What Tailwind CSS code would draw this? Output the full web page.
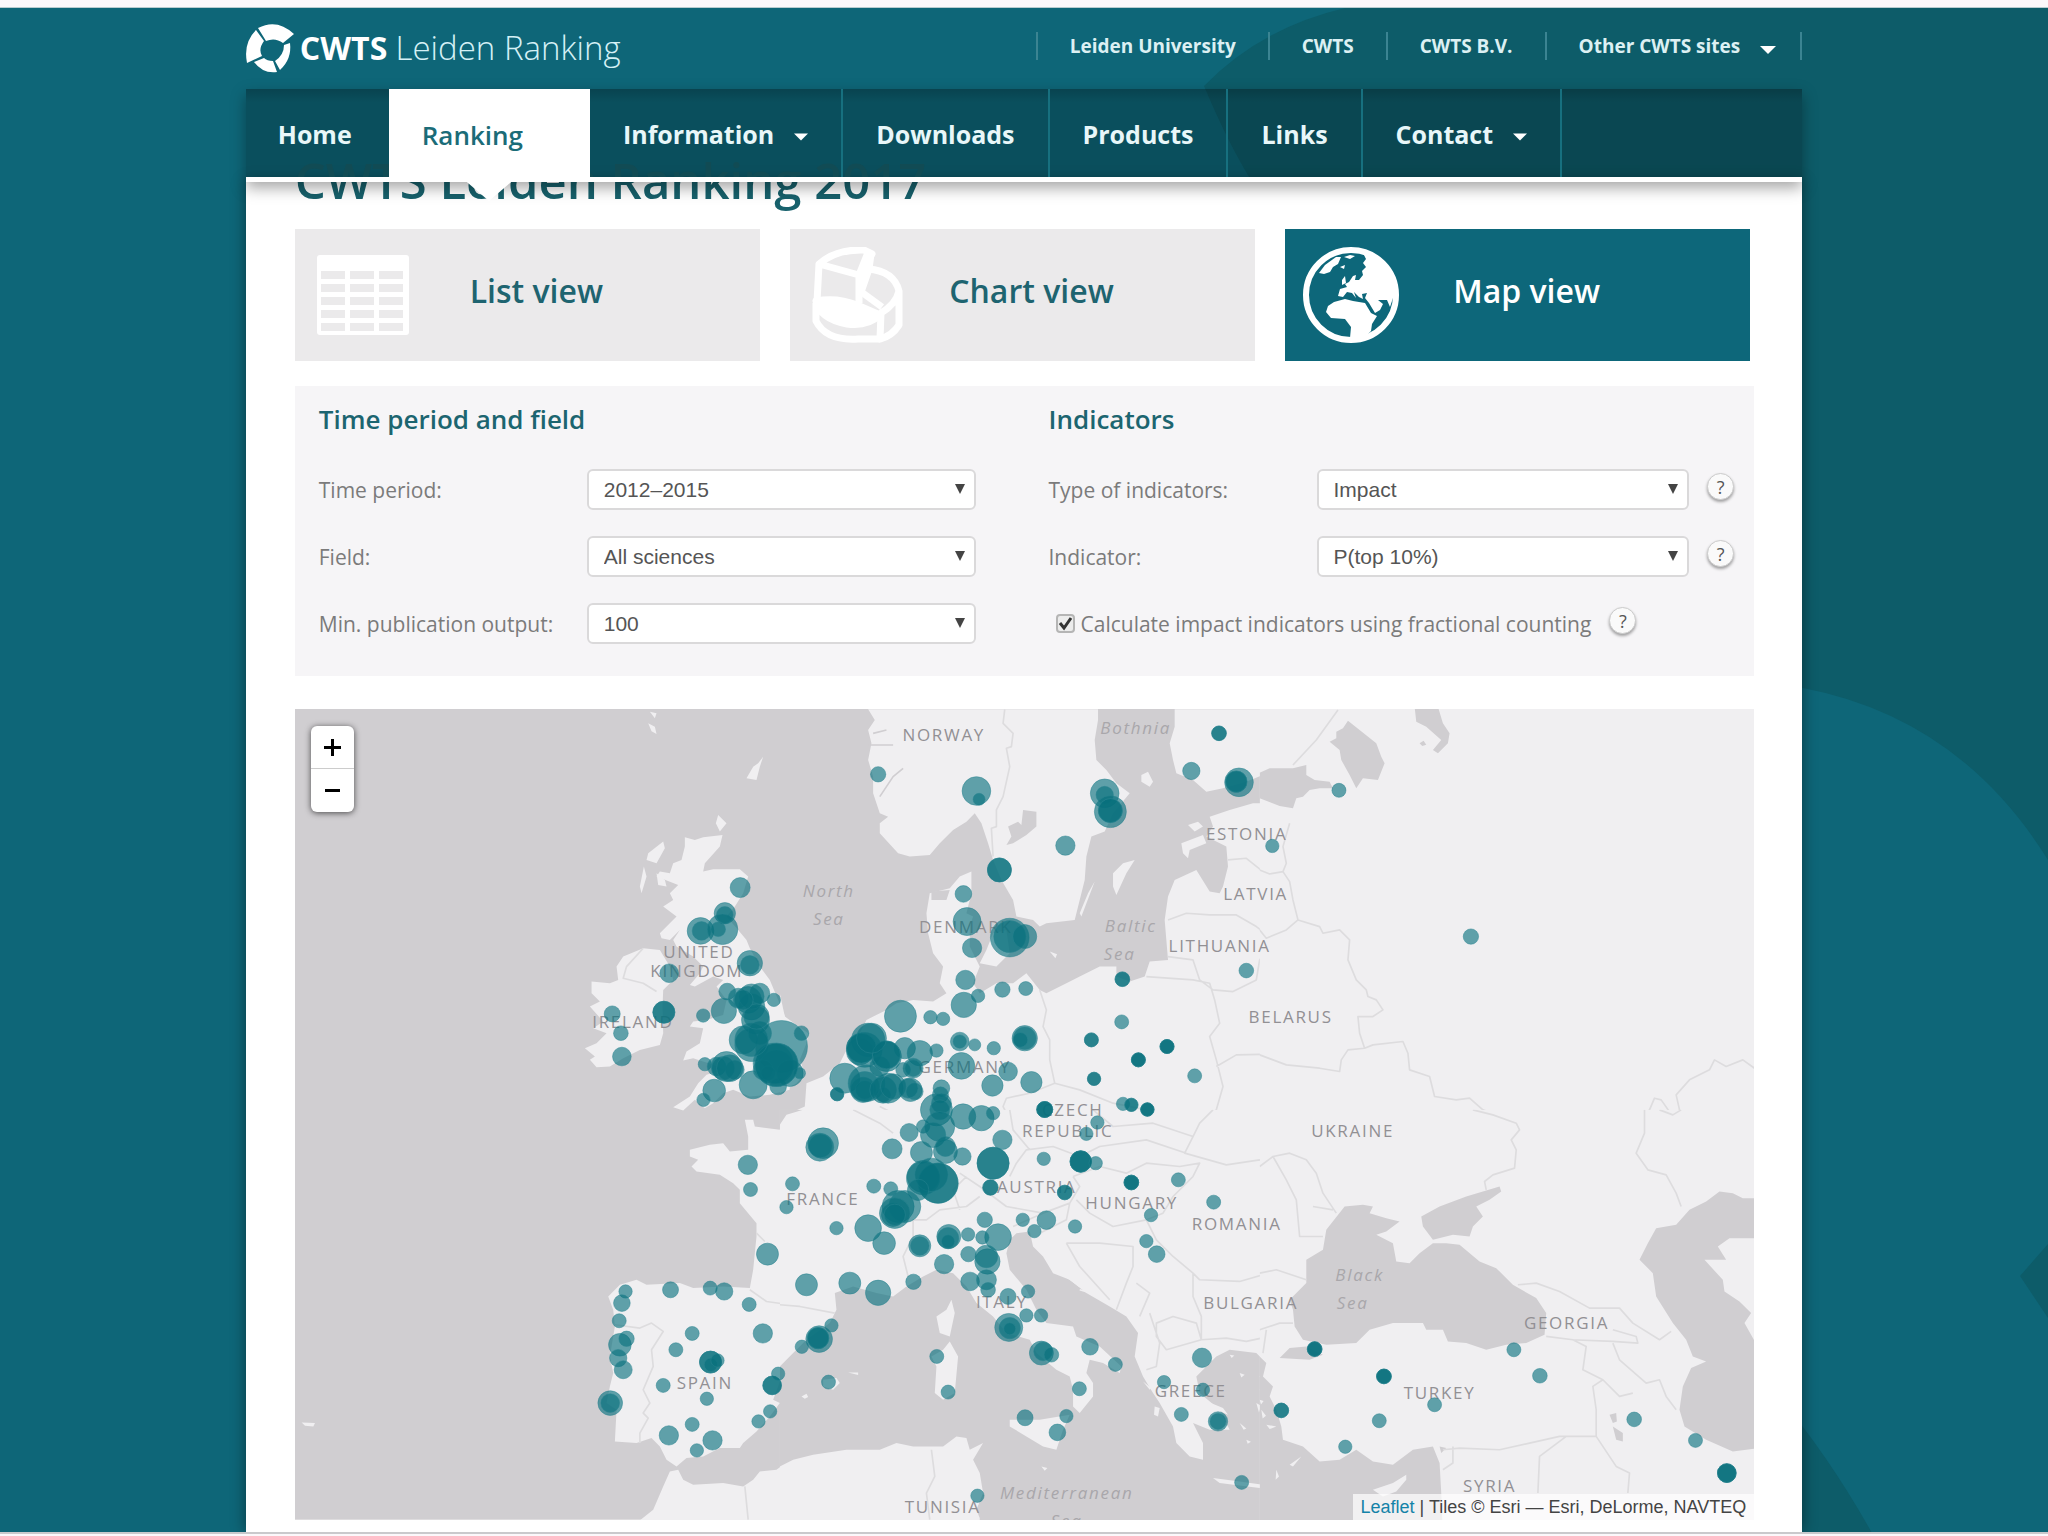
<!DOCTYPE html>
<html lang="en">
<head>
  <meta charset="UTF-8">
  <meta name="viewport" content="width=device-width, initial-scale=1">
  <title>CWTS Leiden Ranking 2017</title>
  <script src="https://cdn.jsdelivr.net/npm/@tailwindcss/browser@4"></script>
</head>
<body class="bg-[#fbf8fb] font-['Open_Sans',sans-serif]">

  <div class="relative mt-[7px] border-t border-[#b9ccd0] bg-[#0e6678] overflow-hidden">
    <!-- Background pattern -->
    <svg class="absolute inset-0 w-full h-full" viewBox="0 0 2048 1525" preserveAspectRatio="xMaxYMin slice" aria-hidden="true">
      <path fill="#0d5c69" d="M1345 0 Q1260 20 1204 78 Q1230 140 1256 180 L1500 700 L1803 680 Q1960 710 2048 852 V0Z"/>
      <path fill="#0d5c69" d="M1780 1390 Q1830 1450 1872 1525 H1780Z M2048 1236 L2020 1268 L2048 1310Z"/>
    </svg>

    <div class="relative w-[76%] mx-auto">
      <!-- Header -->
      <header class="h-[81px] flex justify-between items-start">
        <a href="#" class="flex items-center mt-[15px] text-white">
          <svg class="w-[50px] h-[50px]" viewBox="0 0 50 50" fill="#fff" aria-hidden="true">
            <path d="M12 5 Q31 -5 48 11 L37 20 Q29 14 20 18 Z"/>
            <path d="M10 7 L18 18 Q12 26 16 33 L1 40 Q-3 20 10 7Z"/>
            <path d="M8 39 L18 35 Q21 38 27 38 L31 49 Q17 51 8 39Z"/>
            <path d="M38 22 L44 20 Q46 36 34 47 L29 38 Q38 32 38 22Z"/>
          </svg>
          <span class="ml-1 text-[32px] leading-[50px]"><b>CWTS</b> <span class="font-light text-[33px] text-[#d5f1f6]">Leiden Ranking</span></span>
        </a>
        <div class="flex mt-6 text-[19px] leading-7 font-bold text-[#dcf0f3]">
          <a href="#" class="border-l-2 border-[#3b8492] px-8">Leiden University</a>
          <a href="#" class="border-l-2 border-[#3b8492] px-8">CWTS</a>
          <a href="#" class="border-l-2 border-[#3b8492] px-8">CWTS B.V.</a>
          <a href="#" class="border-x-2 border-[#3b8492] pl-8 pr-6 flex items-center gap-5">Other CWTS sites
            <svg class="w-4 h-2 mt-2" viewBox="0 0 16 8" fill="#fff"><path d="M0 0H16L8 8Z"/></svg>
          </a>
        </div>
      </header>

      <!-- Navbar -->
      <nav class="relative z-20 border-b-[5px] border-white shadow-[0_6px_14px_rgba(0,0,0,0.35)]">
        <div class="h-[88px] flex bg-black/22 bg-linear-to-b from-black/15 to-transparent to-15% text-[25px] font-bold text-[#e8f7f9]">
          <a href="#" class="flex items-center pt-1 pl-8 pr-[37px]">Home</a>
          <a href="#" class="relative flex items-center pt-1 px-[33px] gap-5 bg-white text-[26px] font-semibold text-[#1b6c78]">Ranking
            <svg class="w-[14px] h-2" viewBox="0 0 16 8" fill="#fff"><path d="M0 0H16L8 8Z"/></svg>
            <svg class="absolute left-1/2 -translate-x-1/2 top-full w-14 h-6" viewBox="0 0 56 24" fill="#fff"><path d="M0 0H56L28 24Z"/></svg>
          </a>
          <a href="#" class="flex items-center pt-1 px-[33px] gap-5 border-r-2 border-[#17707f]">Information
            <svg class="w-[14px] h-2 mt-1" viewBox="0 0 16 8" fill="#fff"><path d="M0 0H16L8 8Z"/></svg>
          </a>
          <a href="#" class="flex items-center pt-1 px-[33px] border-r-2 border-[#17707f]">Downloads</a>
          <a href="#" class="flex items-center pt-1 px-[33px] border-r-2 border-[#17707f]">Products</a>
          <a href="#" class="flex items-center pt-1 px-[33px] border-r-2 border-[#17707f]">Links</a>
          <a href="#" class="flex items-center pt-1 px-[33px] gap-5 border-r-2 border-[#17707f]">Contact
            <svg class="w-[14px] h-2 mt-1" viewBox="0 0 16 8" fill="#fff"><path d="M0 0H16L8 8Z"/></svg>
          </a>
        </div>
      </nav>

      <main class="bg-white pl-[49px] pr-12 pb-3 shadow-[0_0_14px_rgba(0,0,0,0.45)]">
        <div class="h-[26px] relative">
          <h1 class="absolute bottom-0 left-0 text-[49px] leading-[56px] font-semibold whitespace-nowrap text-[#17616c]">CWTS Leiden Ranking 2017</h1>
        </div>

        <!-- View switcher -->
        <div class="mt-[21px] pr-1 grid grid-cols-3 gap-[30px] text-[32px] font-semibold text-[#1e6470]">
          <button class="h-[132px] flex items-center bg-[#ebeaeb]">
            <svg class="ml-[22px] w-[92px] h-20" viewBox="0 0 92 80" aria-hidden="true">
              <rect width="92" height="80" rx="3" fill="#fff"/>
              <path fill="#ebeaeb" d="M4 16h24v8H4zM33 16h24v8H33zM62 16h24v8H62zM4 29h24v8H4zM33 29h24v8H33zM62 29h24v8H62zM4 42h24v8H4zM33 42h24v8H33zM62 42h24v8H62zM4 55h24v8H4zM33 55h24v8H33zM62 55h24v8H62zM4 68h24v8H4zM33 68h24v8H33zM62 68h24v8H62z"/>
            </svg>
            <span class="flex-1 pr-24 pb-2">List view</span>
          </button>
          <button class="h-[132px] flex items-center bg-[#ebeaeb]">
            <svg class="ml-[22px] w-[92px] h-24" viewBox="0 0 92 96" fill="none" stroke="#fff" stroke-width="7" stroke-linejoin="round" aria-hidden="true">
              <path d="M7 17Q24 2 52 3L60 7L47 28Z M7 17L5 55 M47 28V56"/>
              <path d="M47 28L55 8L59 7L57 22L49 45Z" fill="#fff"/>
              <path d="M56 22Q82 24 87 44V78Q80 89 68 92L69 66Q84 57 87 44 M48 44L70 60"/>
              <path d="M4 54Q25 50 45 58L68 68Q55 80 35 77Q8 72 4 54Z" fill="#fff"/>
              <path d="M4 56V74Q14 94 46 92L68 92"/>
            </svg>
            <span class="flex-1 pr-24 pb-2">Chart view</span>
          </button>
          <button class="h-[132px] flex items-center bg-[#0d677a] text-white">
            <svg class="ml-[18px] w-24 h-24" viewBox="0 0 96 96" fill="#fff" aria-hidden="true">
              <circle cx="48" cy="48" r="45" fill="none" stroke="#fff" stroke-width="6"/>
              <path d="M60 6L63 12L60 16L63 20L59 24L60 28L56 33L52 33L53 28L50 29L46 35L42 37L44 40L37 42L35 49L40 50L44 45L49 46L53 51L51 45L56 50L60 52L59 47L64 46L62 51L66 56L72 66L77 63L80 57L75 53L84 53L87 60L92 45L86 26L75 13Z"/>
              <path d="M31 55L42 52L50 54L62 56L68 66L74 69L69 77L68 84L60 92L47 91L48 80L42 72L28 71L23 65L25 59Z"/>
              <path d="M22 18L33 10L38 10L35 17L30 20L27 25L21 27L16 26ZM41 10L47 8L52 9L47 12ZM37 20L42 18L41 22ZM39 33L42 29L43 36L39 38Z"/>
            </svg>
            <span class="flex-1 pr-24 pb-2">Map view</span>
          </button>
        </div>

        <!-- Filters -->
        <form class="mt-[25px] grid grid-cols-2 bg-[#f6f5f7] pt-[15px] pb-8 text-[21px] text-[#7b7b7b]">
          <section class="pl-6 pr-[49px]">
            <h2 class="text-[26px] leading-9 font-semibold text-[#1c6570]">Time period and field</h2>
            <div class="mt-8 flex flex-col gap-[26px]">
              <div class="flex items-center h-[41px]">
                <label for="period" class="w-[268px] pt-[3px]">Time period:</label>
                <div class="relative flex-1">
                  <select id="period" class="appearance-none w-full h-[41px] pl-[15px] rounded-md border-2 border-[#dad9da] bg-white text-[#555] font-['Liberation_Sans',sans-serif]"><option>2012–2015</option></select>
                  <svg class="absolute right-[11px] top-[15px] w-[10px] h-[10px] pointer-events-none" viewBox="0 0 10 10" fill="#444"><path d="M0 0H10L5 10Z"/></svg>
                </div>
              </div>
              <div class="flex items-center h-[41px]">
                <label for="field" class="w-[268px] pt-[3px]">Field:</label>
                <div class="relative flex-1">
                  <select id="field" class="appearance-none w-full h-[41px] pl-[15px] rounded-md border-2 border-[#dad9da] bg-white text-[#555] font-['Liberation_Sans',sans-serif]"><option>All sciences</option></select>
                  <svg class="absolute right-[11px] top-[15px] w-[10px] h-[10px] pointer-events-none" viewBox="0 0 10 10" fill="#444"><path d="M0 0H10L5 10Z"/></svg>
                </div>
              </div>
              <div class="flex items-center h-[41px]">
                <label for="output" class="w-[268px] pt-[3px]">Min. publication output:</label>
                <div class="relative flex-1">
                  <select id="output" class="appearance-none w-full h-[41px] pl-[15px] rounded-md border-2 border-[#dad9da] bg-white text-[#555] font-['Liberation_Sans',sans-serif]"><option>100</option></select>
                  <svg class="absolute right-[11px] top-[15px] w-[10px] h-[10px] pointer-events-none" viewBox="0 0 10 10" fill="#444"><path d="M0 0H10L5 10Z"/></svg>
                </div>
              </div>
            </div>
          </section>

          <section class="pl-6 pr-5">
            <h2 class="text-[26px] leading-9 font-semibold text-[#1c6570]">Indicators</h2>
            <div class="mt-8 flex flex-col gap-[26px]">
              <div class="flex items-center h-[41px]">
                <label for="type" class="w-[268px] pt-[3px]">Type of indicators:</label>
                <div class="relative flex-1">
                  <select id="type" class="appearance-none w-full h-[41px] pl-[15px] rounded-md border-2 border-[#dad9da] bg-white text-[#555] font-['Liberation_Sans',sans-serif]"><option>Impact</option></select>
                  <svg class="absolute right-[11px] top-[15px] w-[10px] h-[10px] pointer-events-none" viewBox="0 0 10 10" fill="#444"><path d="M0 0H10L5 10Z"/></svg>
                </div>
                <button type="button" class="ml-[18px] mb-[6px] w-[27px] h-[27px] rounded-full border border-[#ccc] bg-[#fafafa] shadow-[0_2px_3px_rgba(0,0,0,0.35)] text-[18px] leading-6 text-[#555]">?</button>
              </div>
              <div class="flex items-center h-[41px]">
                <label for="indicator" class="w-[268px] pt-[3px]">Indicator:</label>
                <div class="relative flex-1">
                  <select id="indicator" class="appearance-none w-full h-[41px] pl-[15px] rounded-md border-2 border-[#dad9da] bg-white text-[#555] font-['Liberation_Sans',sans-serif]"><option>P(top 10%)</option></select>
                  <svg class="absolute right-[11px] top-[15px] w-[10px] h-[10px] pointer-events-none" viewBox="0 0 10 10" fill="#444"><path d="M0 0H10L5 10Z"/></svg>
                </div>
                <button type="button" class="ml-[18px] mb-[6px] w-[27px] h-[27px] rounded-full border border-[#ccc] bg-[#fafafa] shadow-[0_2px_3px_rgba(0,0,0,0.35)] text-[18px] leading-6 text-[#555]">?</button>
              </div>
              <div class="flex items-center h-[41px]">
                <span class="relative ml-[7px] w-[19px] h-[19px]">
                  <input id="fractional" type="checkbox" checked class="block appearance-none w-[19px] h-[19px] rounded-sm border-2 border-[#b5b5b5] bg-[#ececec]">
                  <svg class="absolute inset-0 w-[19px] h-[19px] pointer-events-none" viewBox="0 0 19 19" fill="none" stroke="#333" stroke-width="3"><path d="M4 9L8 14L15 4"/></svg>
                </span>
                <label for="fractional" class="ml-[6px] pt-[3px]">Calculate impact indicators using fractional counting</label>
                <button type="button" class="ml-[18px] mb-[6px] w-[27px] h-[27px] rounded-full border border-[#ccc] bg-[#fafafa] shadow-[0_2px_3px_rgba(0,0,0,0.35)] text-[18px] leading-6 text-[#555]">?</button>
              </div>
            </div>
          </section>
        </form>

        <!-- Map -->
        <div class="relative mt-[33px] overflow-hidden">
          <svg id="map" class="block w-full" viewBox="0 0 1460 811">
            <rect width="1460" height="811" fill="#d0ced1"/>
            <g fill="#f0eff1" stroke-width="5" stroke-linejoin="round">
              <!-- British Isles -->
              <svg x="-5" y="-9" width="500" height="420" viewBox="0 0 1500 1260">
                <path d="M1185 412L1215 420 1240 412 1298 405 1290 440 1245 490 1240 515 1270 508 1350 508 1375 530 1360 580 1335 620 1310 650 1345 690 1370 720 1380 745 1410 800 1440 840 1465 900 1490 960 1500 975 1500 1170 1440 1185 1380 1190 1330 1170 1300 1180 1270 1210 1245 1225 1215 1200 1180 1232 1150 1222 1200 1190 1225 1150 1250 1125 1300 1110 1270 1095 1210 1075 1180 1082 1190 1055 1230 1030 1240 985 1200 980 1210 965 1250 960 1300 945 1310 900 1280 860 1300 840 1270 830 1215 860 1200 855 1230 820 1240 800 1210 770 1160 740 1150 720 1170 690 1140 720 1115 715 1110 700 1160 650 1120 620 1150 600 1140 580 1165 555 1100 530 1110 515 1140 520 1150 490 1175 480 1185 440Z"/>
                <path d="M1120 425L1125 445 1100 490 1070 480 1075 460ZM1062 500L1070 530 1055 580 1050 560ZM1420 170L1410 200 1400 240 1370 235 1390 200 1405 190ZM1285 345L1310 370 1290 395 1278 370ZM1080 35l20 5-5 15zM1075 70l20 10 5 22-15-8zM1100 520l25 20 5 20-25-5z"/>
                <path d="M1060 745L1110 750 1140 800 1150 840 1120 870 1118 920 1120 1000 1110 1035 1050 1050 1000 1075 960 1100 920 1102 900 1080 915 1070 885 1045 920 1030 950 1000 910 985 940 965 900 920 930 905 905 880 905 845 960 850 985 840 980 800 1000 770Z"/>
                <path fill="none" stroke="#dddcde" d="M1060 745L1010 800 1000 835 1060 850 1100 875"/>
              </svg>
              <!-- Scandinavia, Baltics, Germany -->
              <svg x="485" y="-9" width="500" height="420" viewBox="0 0 1500 1260">
                <path d="M0 880L15 950 50 975 85 1000 80 1030 60 1080 75 1120 50 1150 0 1180Z"/>
                <path d="M265 28L285 60 265 90 275 130 265 180 280 230 280 280 300 340 325 350 300 370 300 400 355 460 390 470 450 465 480 430 520 390 560 365 585 340 605 370 625 430 640 480 665 540 700 600 710 650 760 660 780 680 800 670 885 660 900 600 915 540 920 470 935 410 975 395 1000 340 1050 280 1010 250 980 210 950 180 945 120 955 60 955 28Z"/>
                <path d="M1185 28L1185 80 1170 130 1180 180 1190 220 1240 240 1280 275 1330 265 1400 245 1500 205 1500 28Z"/>
                <path d="M1500 310L1420 310 1350 330 1290 350 1300 380 1280 410 1340 440 1345 500 1330 560 1320 580 1290 575 1250 510 1185 540 1165 590 1155 660 1165 780 1110 785 1095 830 1050 845 1010 830 1010 800 960 800 900 830 860 850 800 880 780 870 740 820 700 850 650 850 600 880 580 850 600 800 570 740 570 680 580 650 560 640 575 580 575 515 540 530 510 565 450 580 440 640 445 700 460 760 490 800 480 850 500 880 460 905 400 900 350 910 320 930 260 960 240 1000 200 1050 180 1090 130 1130 80 1150 75 1220 20 1245 0 1258 0 1260 1500 1260Z"/>
                <path d="M640 700L680 690 690 760 650 800 600 790 620 750ZM1065 480L1040 520 1010 585 1000 560 1000 520 1030 490ZM945 545L905 650 900 640 925 580ZM1085 225l20-10 15 30-10 15-25-15zM1225 375l30-10 15 15-25 15zM1205 430L1270 405 1280 430 1230 450 1225 475 1210 460ZM810 755l22 8-5 12z"/>
                <path fill="#d0ced1" d="M730 330L770 335 770 380 740 405 700 430 680 435 695 410 685 380 715 365 725 375ZM455 575L510 570 500 600 455 600Z"/>
                <path fill="none" stroke="#d0ced1" d="M265 135L340 135M280 100L320 90M300 290L340 230 370 205"/>
                <path fill="none" stroke="#dddcde" d="M675 28L670 70 700 100 695 140 680 145 690 200 670 290 650 330 650 380 635 385 640 470M1345 480L1400 475 1450 515 1500 505M1165 660L1220 640 1290 645 1370 645 1430 680 1470 710 1500 695M1165 770L1240 780 1260 840 1300 870 1360 875 1430 840 1440 780 1500 700M1100 830L1240 840 1290 850 1305 900 1320 970 1290 1010 1310 1080 1330 1160 1310 1230 1260 1258M1310 1100L1370 1065 1500 1062M780 870L800 930 790 980 810 1020 810 1080 825 1150L900 1170 1000 1210 1100 1230M825 1150L750 1180 680 1195 670 1220 690 1258M340 1240L300 1220"/>
              </svg>
              <!-- Russia, Belarus -->
              <svg x="965" y="-9" width="500" height="420" viewBox="0 0 1500 1260">
                <rect y="20" width="1500" height="1240"/>
                <path fill="#d0ced1" d="M0 218L30 205 100 205 140 195 140 225 165 240 210 245 220 265 180 265 150 270 130 290 110 295 100 325 60 318 0 295ZM265 62L300 90 350 130 365 170 375 190 355 240 310 235 290 265 270 225 245 180 240 150 210 125 230 115 230 95 250 85ZM465 20L535 20 550 70 570 100 565 130 535 160 520 150 545 120 500 80 470 65ZM480 130l12-8 8 12-12 4z"/>
                <path fill="none" stroke="#dddcde" d="M235 30L170 120 100 195M90 370L70 440 80 490 70 515M0 510L30 522 70 515 90 545 100 600 115 660 80 690 20 715 0 690M115 660L180 680 190 700 240 690 270 720 265 780 290 840 320 870 325 890 350 900 370 930 340 950 295 950 300 1000 315 1045 265 1050 245 1080 240 1115 180 1105 80 1095 0 1065M315 1045L340 1035 430 1025 445 1060 450 1110 510 1130 525 1190 590 1200 630 1195 670 1230 750 1258M1145 1258L1170 1230 1185 1195 1205 1200 1240 1250 1260 1230 1250 1185 1290 1140 1350 1110 1365 1080 1400 1100 1450 1080 1485 1105"/>
              </svg>
              <!-- Iberia, western France -->
              <svg x="-5" y="401" width="500" height="426" viewBox="0 0 1500 1278">
                <path d="M1365 30L1390 30 1395 50 1470 60 1475 30 1500 15 1500 760 1480 790 1450 870 1470 880 1440 920 1400 965 1360 1000 1350 1015 1290 1015 1240 1040 1190 1045 1160 1070 1130 1050 1110 1010 1085 985 1040 1000 975 995 980 900 950 880 960 830 970 790 960 740 975 650 970 600 955 560 990 525 1040 510 1070 525 1170 520 1210 535 1300 530 1380 535 1390 480 1400 380 1400 340 1350 280 1350 240 1330 220 1290 195 1220 185 1205 170 1225 150 1200 140 1200 120 1260 105 1300 100 1320 125 1375 120 1375 80Z"/>
                <path d="M1040 1240L1090 1200 1120 1130 1140 1085 1165 1080 1180 1110 1210 1125 1300 1120 1360 1130 1390 1110 1410 1085 1460 1080 1500 1050 1500 1240ZM35 938L75 940 70 950 45 948Z"/>
                <path fill="none" stroke="#dddcde" d="M1365 1130L1375 1230M975 645L1050 655 1085 640 1120 665 1085 720 1090 770 1060 840 1080 880 1060 910 1075 925 1050 970 1050 1000M1380 540L1430 575 1500 585M1400 370L1425 395"/>
              </svg>
              <!-- Central Europe, Italy, Balkans -->
              <svg x="485" y="401" width="500" height="426" viewBox="0 0 1500 1278">
                <rect width="1500" height="1278"/>
                <path fill="#d0ced1" d="M0 0L70 0 20 15 0 45ZM0 770L40 730 80 690 150 640 170 600 165 550 220 530 290 550 340 560 380 530 430 500 470 480 520 490 560 530 590 580 640 620 680 670 750 690 770 730 830 780 870 800 880 840 880 890 900 910 940 860 940 820 920 790 930 750 970 760 1020 790 1025 770 960 710 890 680 880 650 800 640 770 600 740 540 690 480 680 430 690 390 710 370 750 365 760 410 790 440 820 490 870 510 920 550 990 590 1040 620 1075 670 1065 740 1090 800 1120 850 1140 880 1180 950 1190 1000 1230 1040 1270 1050 1270 1000 1240 940 1290 960 1350 960 1320 900 1260 850 1250 800 1280 770 1310 740 1350 720 1430 730 1460 760 1440 800 1480 830 1500 860 1500 1278 600 1278 600 1225 590 1200 610 1150 600 1090 580 1050 610 1000 570 1020 560 985 530 980 490 1010 400 1010 350 1000 300 1020 200 1020 100 1035 40 1050 0 1070Z"/>
                <path d="M515 570L525 610 510 680 480 670 470 620 500 600ZM510 695L535 740 525 850 490 870 465 850 470 770 455 740 490 720ZM690 930L780 930 870 915 850 960 830 1020 790 1010 740 980 690 950ZM1300 1105L1380 1115 1450 1125 1440 1135 1320 1120ZM130 810l40-5 10 15-20 20-30-10zM205 788l30 0 0 8zM65 860l15-8 5 10-10 5zM785 1070l18 5-8 8zM1090 815l25 20-5 5zM1125 890l15 5-5 25-12-5zM1270 870L1330 895 1345 915 1300 895ZM1380 790l15 5-10 8zM1350 735l14 2-8 8zM1430 880l14 8-6 20zM1460 900l12 8-10 14zM1400 990l14 6-10 6zM1380 940l20 16-8 4zM1440 840l30 8-20 10z"/>
                <path fill="none" stroke="#f0eff1" d="M795 390L800 440M815 400L820 450M860 500L900 530M900 540L950 555"/>
                <path fill="none" stroke="#dddcde" d="M0 585L60 590 165 610M385 500L370 440 400 380 400 330 440 330 480 300 560 290 600 260M540 190L600 230 680 290 790 310 870 280 900 230 880 200M880 200L960 170 1040 190 1100 160 1200 170 1260 160 1240 200 1180 260 1150 310 1100 330 1000 350 930 310 890 270M690 200L710 160 740 120 820 110 900 140 960 110 1100 90 1220 130M690 0L700 60 750 120M940 0L1000 50 1120 40 1240 80 1215 130 1340 165 1440 150 1500 180M1240 80L1260 40 1300 0M1100 330L1130 390 1180 440 1240 490 1260 510 1380 515 1500 480M860 400L960 400 1060 410 1060 470 1040 520 1010 600M860 400L900 470 990 570M700 350L790 310M870 280L860 330 780 370M1070 520L1110 550 1080 620M1130 640L1180 620 1250 640 1265 690 1160 720 1130 680ZM1240 490L1240 560 1265 620 1265 690 1340 685 1400 695 1470 680 1500 660M1110 610L1140 700 1130 770 1100 780M455 1020L465 1100 440 1150 450 1230M220 0L300 40 340 70M540 300L520 240 560 200"/>
              </svg>
              <!-- Black Sea, Turkey, Caspian Sea -->
              <svg x="965" y="401" width="500" height="426" viewBox="0 0 1500 1278">
                <rect width="1500" height="1278"/>
                <path fill="#d0ced1" d="M255 290L310 285 340 290 330 310 380 325 420 335 380 365 350 375 400 400 410 455 450 460 480 430 520 400 560 400 600 405 660 455 710 475 760 525 830 565 860 610 855 675 800 700 740 705 680 720 620 700 565 695 550 660 500 660 490 640 400 640 330 660 290 700 200 705 130 690 105 650 100 600 90 570 140 520 140 450 190 420 200 360ZM485 320L540 290 620 260 720 230 725 245 690 270 650 290 670 320 640 350 630 380 580 375 520 390 490 350ZM60 745L90 715 140 710 190 735 150 750Z"/>
                <path fill="#d0ced1" d="M1500 265L1450 265 1420 250 1380 245 1340 275 1290 300 1250 345 1190 355 1165 400 1140 450 1180 490 1190 560 1240 640 1280 690 1300 740 1340 755 1295 775 1270 830 1260 900 1275 950 1340 990 1420 1025 1500 1015 1500 720 1455 640 1475 610 1440 575 1395 545 1390 510 1335 450 1400 450 1375 410 1410 385 1500 385Z"/>
                <path fill="#d0ced1" d="M0 740L20 760 10 800 40 830 30 860 50 900 65 950 70 990 130 1010 180 1055 240 1050 290 1020 340 1055 400 1065 460 1020 520 1010 540 1060 545 1150 550 1278 0 1278ZM540 1010l20 5-15 15zM1060 950l30 20 0 25-20-5zM1050 915l20-5 2 25-12 5z"/>
                <path d="M340 1140L400 1120 440 1095 440 1110 410 1145 370 1160ZM90 1065L125 1040 100 1070ZM0 870l12 4-8 10zM20 945l30 5-20 8zM50 1080l8 20-10 10zM5 900l14 18-10 8z"/>
                <path fill="none" stroke="#dddcde" d="M640 0L700 15 770 40 780 60 755 90 770 120 765 175 700 195 675 215 680 240M1155 0L1155 70 1130 130 1165 180 1220 195 1250 250 1265 290M1200 0L1240 15 1265 0M0 170L40 140 90 130 140 150 170 190 190 250 230 310M40 140L80 210 110 270 120 380 190 380M160 290L220 300M0 490L50 480 140 510M0 660L60 640 100 640M20 660L10 730M775 525L830 520 900 545 990 595 1080 595 1120 640 1200 690 1235 665M860 680L940 690 980 710 970 780 1030 810 1080 860 1120 850M935 690L1060 695 1135 700 1130 680 1060 660M1060 700L1080 750 1160 820 1200 810 1220 860 1250 900M1030 810L1000 830 1010 900 1010 980 1070 1070 1110 1090 1105 1150M550 1020L600 1015 720 1020 810 1000 900 980 1010 980M920 980L840 1040 835 1150M580 1010L580 1060 550 1080"/>
              </svg>
            </g>

            <!-- Country names -->
            <g class="text-[17px] tracking-widest" fill="#929094" text-anchor="middle">
              <text x="649" y="32">NORWAY</text>
              <text x="952" y="131">ESTONIA</text>
              <text x="961" y="191">LATVIA</text>
              <text x="925" y="243">LITHUANIA</text>
              <text x="996" y="314">BELARUS</text>
              <text x="1058" y="428">UKRAINE</text>
              <text x="671" y="224">DENMARK</text>
              <text x="404" y="249">UNITED</text>
              <text x="402" y="268">KINGDOM</text>
              <text x="338" y="319">IRELAND</text>
              <text x="670" y="364">GERMANY</text>
              <text x="778" y="407">CZECH</text>
              <text x="773" y="428">REPUBLIC</text>
              <text x="742" y="484">AUSTRIA</text>
              <text x="528" y="496">FRANCE</text>
              <text x="837" y="500">HUNGARY</text>
              <text x="942" y="521">ROMANIA</text>
              <text x="956" y="600">BULGARIA</text>
              <text x="410" y="680">SPAIN</text>
              <text x="707" y="599">ITALY</text>
              <text x="896" y="688">GREECE</text>
              <text x="1272" y="620">GEORGIA</text>
              <text x="1145" y="690">TURKEY</text>
              <text x="1195" y="783">SYRIA</text>
              <text x="648" y="804">TUNISIA</text>
            </g>
            <g class="text-[17px] tracking-widest italic" fill="#a9a7ab" text-anchor="middle">
              <text x="534" y="188">North</text>
              <text x="534" y="216">Sea</text>
              <text x="836" y="223">Baltic</text>
              <text x="825" y="251">Sea</text>
              <text x="841" y="25">Bothnia</text>
              <text x="1065" y="572">Black</text>
              <text x="1058" y="600">Sea</text>
              <text x="772" y="790">Mediterranean</text>
              <text x="772" y="818">Sea</text>
            </g>
            <g id="dots" fill="#06707d" fill-opacity="0.62" stroke="#2a8490" stroke-opacity="0.5"></g>
          </svg>

          <!-- Zoom control -->
          <div class="absolute left-4 top-[17px] w-[43px] rounded-md bg-white shadow-[0_1px_6px_rgba(0,0,0,0.65)] flex flex-col">
            <button aria-label="Zoom in" class="h-[43px] flex items-center justify-center border-b border-[#ccc]">
              <svg class="w-[17px] h-[17px]" viewBox="0 0 17 17"><path d="M0 7h7V0h3v7h7v3h-7v7H7v-7H0z"/></svg>
            </button>
            <button aria-label="Zoom out" class="h-[43px] flex items-center justify-center">
              <svg class="w-[15px] h-[3px]" viewBox="0 0 15 3"><rect width="15" height="3"/></svg>
            </button>
          </div>

          <div class="absolute right-0 bottom-0 px-2 bg-white/70 text-[18px] leading-[26px] text-[#444] font-['Liberation_Sans',sans-serif]">
            <a href="#" class="text-[#1483a8]">Leaflet</a> | Tiles © Esri — Esri, DeLorme, NAVTEQ
          </div>
        </div>
      </main>
    </div>
  </div>
  <div class="h-[3px] border-t-2 border-[#c9c9cc]"></div>

  <script>
    // Universities per tile: x, y, radius and (optional) number of stacked markers
    const tiles = [
      { x: -5, y: -9, dots: [[1351,563,30],[1305,640,32],[1305,645,25],[1232,693,40],[1235,693,28],[1298,688,46],[1285,688,22],[1380,790,38],[1380,795,28],[1138,820,28],[1122,937,33,2],[967,942,24],[993,1000,22],[996,1070,28],[1240,947,20],[1312,875,25],[1302,933,38],[1345,895,30],[1410,880,30],[1375,900,40],[1385,920,40],[1397,960,42],[1360,1020,42],[1385,1035,50],[1452,900,20],[1475,1040,78],[1450,1090,60],[1460,1100,50],[1245,1093,20],[1280,1100,28],[1310,1100,45],[1335,1110,28],[1300,1105,35],[1390,1155,42],[1465,1160,25],[1273,1172,34],[1241,1200,20],[1420,1110,30],[1435,1120,22],[1500,1120,40],[1410,1000,35]] },
      { x: 485, y: -9, dots: [[65,1000,22],[60,1120,17],[295,223,23],[590,273,43],[598,298,18],[975,280,43],[975,285,26],[992,335,48],[992,332,36,2],[857,437,29],[659,510,36,2],[551,582,25],[562,665,42],[577,744,29],[690,713,58],[690,710,48],[735,710,36],[557,840,29],[668,869,23],[738,866,21],[595,888,20],[552,915,38],[362,949,48],[452,952,20],[490,957,20],[1318,100,22,2],[1235,213,26],[1378,247,43],[1370,245,32,2],[1478,438,20],[1028,838,22,2],[1400,812,22],[1026,966,21],[935,1020,21,2],[1162,1040,21,3],[1076,1080,21,3],[943,1137,20,2],[1245,1128,21],[1030,1212,20],[1055,1215,20,2],[1103,1229,20,3],[795,1229,24,3],[735,1015,38],[735,1015,34],[722,1020,22],[540,1025,28],[540,1025,20],[585,1035,18],[642,1045,20],[545,1098,40],[685,1115,28],[755,1147,32],[638,1157,32],[265,1020,50],[240,1055,40],[255,1050,52],[320,1070,45],[375,1045,32],[420,1060,38],[470,1052,20],[400,1105,30],[300,1100,30],[195,1135,45],[172,1183,20,2],[260,1150,55],[250,1170,38],[255,1170,28],[325,1165,45],[310,1185,22],[392,1170,35],[405,1175,25],[370,1110,22],[485,1165,25],[482,1185,24],[470,1230,48],[550,1250,38],[605,1255,38],[640,1240,20],[485,1210,30]] },
      { x: 385, y: 251, dots: [[290,315,65,2],[215,240,50],[545,265,45,2],[620,285,42,2],[575,235,45],[555,380,45],[610,390,40],[640,380,38],[685,385,30],[775,670,60],[730,650,48],[655,740,48],[640,765,35],[780,450,30],[215,110,38],[230,170,38],[150,325,40],[190,120,30],[700,325,25]] },
      { x: 965, y: -9, dots: [[238,271,21],[634,710,23]] },
      { x: -5, y: 401, dots: [[1374,165,29],[1382,239,21],[1433,433,33],[1007,545,20],[996,580,25],[988,633,21],[1142,540,24],[1261,535,21],[1303,545,26],[1378,584,21],[1419,671,29],[1207,671,21],[1158,720,21],[990,705,34],[1010,687,23],[985,745,26],[1000,780,27],[1262,757,33,2],[1263,765,20],[1283,752,20],[1120,827,21],[1251,867,20],[1447,827,28,2],[1465,792,20],[1441,905,20],[1406,935,20],[961,880,37],[961,880,28],[1137,977,29],[1207,944,21],[1268,992,29],[1221,1022,20]] },
      { x: 485, y: 401, dots: [[130,100,46],[120,112,42],[122,108,36],[337,117,30],[388,68,27],[430,50,20],[480,50,45],[460,75,38],[425,128,33],[497,125,36],[497,110,30],[548,140,26],[668,90,29],[640,160,48,2],[792,147,20],[903,155,32,3],[948,160,20],[920,72,20],[953,38,20],[632,233,23,2],[855,248,22,2],[282,229,21],[333,237,21],[38,222,21],[20,292,20],[170,355,20],[430,205,50],[475,220,60],[455,195,50],[415,240,32],[375,290,48],[345,310,46],[345,315,32],[265,355,40],[313,400,34],[420,408,33],[420,408,28],[507,380,36],[505,385,32],[505,395,20],[565,374,20],[615,330,23],[655,382,40],[608,383,20],[566,433,23],[623,455,38],[620,440,34],[493,463,29],[571,515,28],[620,510,30],[625,540,22],[401,516,23],[295,549,38],[210,520,33],[80,525,33],[729,330,20],[764,364,20],[800,331,28],[886,350,20],[1055,218,22,3],[1196,210,21],[1302,277,21],[1114,316,20],[1100,394,20],[1131,433,25],[685,560,24],[745,545,20],[740,617,20],[784,617,20],[687,653,42],[690,655,32],[690,657,18],[785,730,36],[790,725,28],[815,735,22],[931,711,25],[1007,764,21],[899,837,21],[860,919,20],[833,968,25],[736,924,24],[505,847,21],[471,740,21],[146,817,21],[66,711,20],[118,688,40],[115,685,32,2],[155,647,20],[1267,744,29],[1153,817,20],[1270,840,20],[1205,914,21],[1315,935,29],[1315,935,24],[1386,1118,21],[593,1158,20]] },
      { x: 965, y: 401, dots: [[165,718,22,3],[373,800,22,3],[763,720,21],[841,798,22],[65,902,22,2],[359,933,21],[525,885,21],[257,1011,20],[1124,929,22],[1308,992,21],[1402,1090,28,3]] }
    ];

    const layer = document.getElementById('dots');
    tiles.forEach(tile => {
      tile.dots.forEach(([x, y, r, count = 1]) => {
        for (let i = 0; i < count; i++) {
          const dot = document.createElementNS('http://www.w3.org/2000/svg', 'circle');
          dot.setAttribute('cx', tile.x + x / 3);
          dot.setAttribute('cy', tile.y + y / 3);
          dot.setAttribute('r', r / 3);
          layer.appendChild(dot);
        }
      });
    });
  </script>

</body>
</html>
